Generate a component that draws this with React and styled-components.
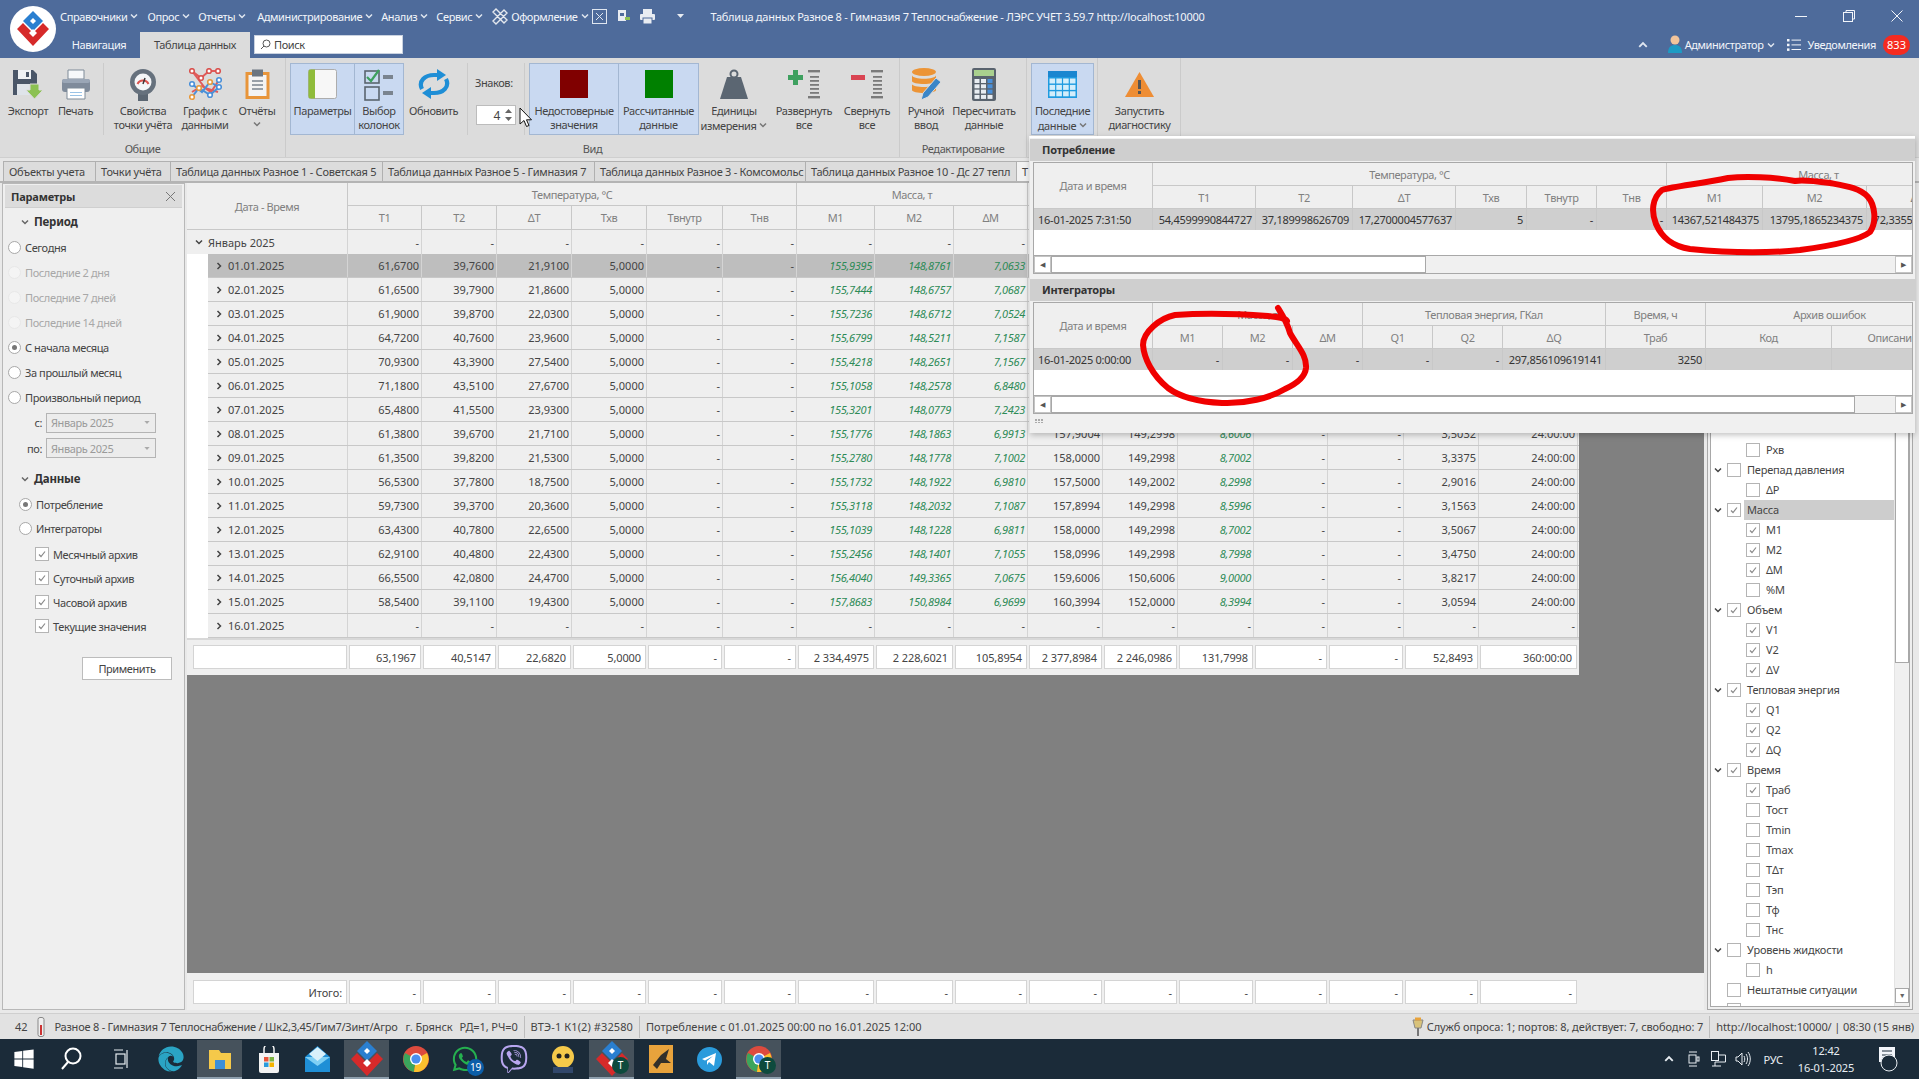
import React from "react";
import styled, { createGlobalStyle } from "styled-components";
import { FaWindows, FaEdge, FaWhatsapp, FaViber } from "react-icons/fa";

const Global = createGlobalStyle`
  html, body { margin: 0; padding: 0; background: #dcdcdc; }
  * { box-sizing: border-box; }
  body { font-family: "Noto Sans", "Liberation Sans", sans-serif; font-size: 11px; color: #444; letter-spacing: -0.4px; }
`;

const Page = styled.div`
  position: relative; width: 1919px; height: 1079px; overflow: hidden;
  display: flex; flex-direction: column; background: #dcdcdc;
`;

/* ---------- title bar ---------- */
const TitleBar = styled.header`
  height: 58px; flex: none; background: #4e6b9b; color: #f2f5fa; display: flex; padding-left: 10px;
`;
const LogoCircle = styled.div`
  width: 46px; height: 46px; margin-top: 6px; flex: none; border-radius: 50%; background: #fff;
  display: flex; align-items: center; justify-content: center;
`;
const TitleRows = styled.div`flex: 1; display: flex; flex-direction: column; min-width: 0;`;
const MenuRow = styled.div`height: 32px; display: flex; align-items: center; padding-left: 4px; position: relative;`;
const MenuItem = styled.span`display: inline-flex; align-items: center; gap: 3px; margin-right: ${p => p.$mr ?? 8}px; white-space: nowrap;`;
const WinTitle = styled.span`margin-left: 27px; white-space: nowrap; letter-spacing: -0.25px;`;
const WinButtons = styled.div`margin-left: auto; display: flex; gap: 36px; padding-right: 16px; align-items: center;`;
const TabRow = styled.div`height: 26px; display: flex; align-items: stretch; padding-left: 7px;`;
const TopTab = styled.div`
  width: ${p => p.$w}px; display: flex; align-items: center; justify-content: center; padding-right: ${p => p.$pr ?? 0}px; padding-bottom: 1px;
  background: ${p => (p.$on ? "#dcdcdc" : "transparent")}; color: ${p => (p.$on ? "#444" : "#f2f5fa")};
`;
const SearchBox = styled.div`
  width: 149px; height: 19px; margin: 3px 0 0 4px; background: #fff; border: 1px solid #c9d2e0;
  display: flex; align-items: center; gap: 3px; padding-left: 5px; color: #444;
`;
const UserArea = styled.div`margin-left: auto; display: flex; align-items: center; padding: 0 9px 1px 0; color: #f2f5fa;`;
const UserName = styled.span`margin: 0 4px 0 3px;`;
const NoticeLabel = styled.span`margin: 0 7px 0 6px;`;
const Badge = styled.span`
  width: 27px; height: 20px; border-radius: 10px; background: #f52b20; color: #fff; text-align: center; line-height: 20px; letter-spacing: 0;
`;

/* ---------- ribbon ---------- */
const Ribbon = styled.section`height: 100px; flex: none; display: flex; background: #dcdcdc; border-bottom: 1px solid #cfcfcf;`;
const RGroup = styled.div`
  width: ${p => p.$w}px; flex: none; display: flex; flex-direction: column; border-right: 1px solid #cbcbcb;
  padding-left: 4px;
`;
const RItems = styled.div`display: flex; height: 72px; margin-top: 5px;`;
const RLabel = styled.div`height: 22px; padding-top: 6px; line-height: 16px; text-align: center; color: #555; margin-left: -4px;`;
const RBtn = styled.div`
  width: ${p => p.$w}px; flex: none; height: 72px; display: flex; flex-direction: column; align-items: center;
  text-align: center; line-height: 14px; color: #444;
  background: ${p => (p.$on ? "#c9d9f1" : "transparent")};
  border: 1px solid ${p => (p.$on ? "#a3b7d2" : "transparent")};
  margin-left: ${p => (p.$joined ? "-1px" : "0")};
`;
const RIcon = styled.div`height: 40px; flex: none; display: flex; align-items: center; justify-content: center;`;
const RSep = styled.div`width: 1px; height: 72px; flex: none; background: #cbcbcb; margin: 0 4px;`;
const Spin = styled.div`width: 48px; flex: none; padding-top: 12px; padding-left: 3px;`;
const SpinBox = styled.div`
  margin: 15px 0 0 1px; width: 40px; height: 20px; background: #fff; border: 1px solid #bcbcbc; display: flex; align-items: center;
  justify-content: flex-end; gap: 5px; padding-right: 3px; font-size: 12px;
`;
const ColorSq = styled.div`width: 28px; height: 28px; background: ${p => p.$c};`;
const SmallChev = styled.span`display: inline-block; vertical-align: 1px; margin-left: 3px;`;
const ChevLine = styled.span`display: block; line-height: 12px; height: 12px;`;

/* ---------- doc tabs ---------- */
const DocTabs = styled.nav`
  height: 25px; flex: none; padding: 3px 0 0 3px; display: flex; background: #e6e6e6; border-bottom: 2px solid #b4b4b4;
`;
const DocTab = styled.div`
  width: ${p => p.$w}px; flex: none; height: 20px; padding: 0 5px; line-height: 19px; background: ${p => (p.$on ? "#f2f2f2" : "#dcdcdc")}; border: 1px solid #b0b0b0;
  border-bottom: 0; margin-right: -1px; overflow: hidden; white-space: nowrap; color: #444; letter-spacing: -0.25px;
`;

/* ---------- body ---------- */
const Body = styled.main`flex: 1; min-height: 0; display: flex; background: #e9e9e9; padding-left: 2px;`;
const LeftPanel = styled.aside`
  width: 183px; flex: none; margin-bottom: 3px; border: 1px solid #b8b8b8; background: #efefef; padding: 1px 2px; display: flex; flex-direction: column;
`;
const PanelHead = styled.div`
  height: 23px; flex: none; background: #dcdcdc; border-bottom: 1px solid #cfcfcf; display: flex; align-items: center; justify-content: space-between;
  padding: 0 6px; font-weight: 700; color: #333; letter-spacing: -0.2px;
`;
const Section = styled.div`
  height: 27px; margin-top: ${p => p.$mt ?? 0}px; display: flex; align-items: center; gap: 5px; padding-left: 16px; font-weight: 700; color: #333; font-size: 11.5px;  letter-spacing: -0.2px;
`;
const RadioRow = styled.div`
  height: ${p => p.$h ?? 25}px; display: flex; align-items: center; gap: 4px; padding-left: ${p => p.$pl ?? 3}px;
  color: ${p => (p.$off ? "#a8a8a8" : "#444")};
`;
const Radio = styled.span`
  width: 13px; height: 13px; flex: none; border-radius: 50%; background: ${p => (p.$off ? "#f4f4f4" : "#fff")}; border: 1px solid ${p => (p.$off ? "#e8e8e8" : "#a8a8a8")};
  display: flex; align-items: center; justify-content: center;
  &::after { content: ""; width: 5px; height: 5px; border-radius: 50%; background: ${p => (p.$on ? "#777" : "transparent")}; }
`;
const CheckList = styled.div`margin-top: 1px;`;
const CheckRow = styled.div`height: 24px; display: flex; align-items: center; gap: 4px; padding-left: 30px;`;
const Box = styled.span`
  width: 14px; height: 14px; flex: none; background: #fff; border: 1px solid #b4b4b4; display: flex; align-items: center; justify-content: center;
`;
const ComboRow = styled.div`height: 25.5px; display: flex; align-items: center; justify-content: flex-end; gap: 4px; padding-right: 26px;`;
const Combo = styled.div`
  width: 110px; height: 20px; border: 1px solid #b4b4b4; background: #ececec; color: #9a9a9a; display: flex; align-items: center; justify-content: space-between; padding: 0 5px 0 4px;
`;
const ApplyBtn = styled.div`
  margin: 19px 0 0 77px; width: 90px; height: 23px; background: #fff; border: 1px solid #bcbcbc; text-align: center; line-height: 21px;
`;

/* ---------- center ---------- */
const Center = styled.div`width: 1517px; flex: none; margin-left: 2px; margin-bottom: 3px; display: flex; flex-direction: column; background: #808080;`;
const TableWrap = styled.div`width: 1392px; height: 492px; flex: none; background: #fff; display: flex; flex-direction: column;`;
const COLS = "74px 75px 75px 75px 76px 74px 78px 79px 74px 75px 75px 76px 74px 76px 75px 99px";
const HeadGrid = styled.div`
  height: 47px; flex: none; display: grid; grid-template-columns: 161px ${COLS}; grid-template-rows: 23px 24px; background: #efefef; border-bottom: 1px solid #c4c4c4;
`;
const HCell = styled.div`
  grid-column: span ${p => p.$c ?? 1}; grid-row: span ${p => p.$r ?? 1}; display: flex; align-items: center; justify-content: center; color: #808080; white-space: nowrap;
  border-right: 1px solid #c8c8c8; border-bottom: 1px solid #c8c8c8; overflow: hidden;
`;
const GroupRow = styled.div`
  height: 24px; flex: none; display: grid; grid-template-columns: 161px ${COLS}; background: #efefef;
`;
const DataRow = styled.div`
  height: 24px; flex: none; display: grid; grid-template-columns: 140px ${COLS}; margin-left: 21px; background: ${p => (p.$sel ? "#bebebe" : "#efefef")};
  border-bottom: 1px solid #c8c8c8;
`;
const Cell = styled.div`
  display: flex; align-items: center; justify-content: flex-end; padding-right: 2px; border-right: 1px solid #d4d4d4; white-space: nowrap;
  color: ${p => (p.$g ? "#2e8b57" : "#444")}; font-style: ${p => (p.$g ? "italic" : "normal")}; letter-spacing: ${p => (p.$g ? "-0.3px" : "0")};
`;
const DateCell = styled.div`display: flex; align-items: center; gap: 5px; padding-left: 7px; border-right: 1px solid #d4d4d4; color: #444; letter-spacing: 0;`;
const GroupCell = styled(DateCell)`padding-left: 8px;`;
const SumRow = styled.div`
  height: 38px; flex: none; border-top: 2px solid #d8d8d8; background: #efefef; display: grid; grid-template-columns: 160px ${COLS};
  padding: 5px 0 0 0; margin: 0;
`;
const SumBox = styled.div`
  height: 24px; margin-left: ${p => (p.$first ? 6 : 2)}px; background: #fff; border: 1px solid #d4d4d4; display: flex; align-items: center; justify-content: flex-end; padding-right: 4px; white-space: nowrap; color: #444; letter-spacing: -0.1px;
`;
const Gray = styled.div`flex: 1; background: #808080;`;
const Foot = styled.div`
  height: 37px; flex: none; background: #efefef; display: grid; grid-template-columns: 160px ${COLS}; padding-top: 7px; align-content: start;
`;
const RightPanel = styled.aside`
  width: 206px; flex: none; margin: 0 0 3px 3px; border: 1px solid #a8a8a8; background: #efefef; padding: 2px; display: flex; flex-direction: column;
`;
const TreeWrap = styled.div`flex: 1; display: flex; border: 1px solid #a8a8a8; background: #fff; min-height: 0; overflow: hidden;`;
const Tree = styled.div`flex: 1; overflow: hidden; padding-top: 253px;`;
const TreeRow = styled.div`
  height: 20px; display: flex; align-items: center; padding-left: ${p => (p.$child ? 35 : 16)}px; position: relative; color: #444; white-space: nowrap; letter-spacing: -0.2px;
`;
const TreeLabel = styled.span`
  flex: 1; height: 20px; line-height: 20px; margin-left: 3px; padding-left: 3px; background: ${p => (p.$sel ? "#cdcdcd" : "transparent")};
`;
const TreeArrow = styled.span`position: absolute; left: 3px; top: 6px; display: flex;`;
const VScroll = styled.div`
  width: 15px; flex: none; background: #f0f0f0; display: flex; flex-direction: column; justify-content: space-between; border-left: 1px solid #e4e4e4; padding-bottom: 3px;
`;
const VThumb = styled.div`height: 478px; background: #fff; border: 1px solid #a8a8a8; margin-top: -2px;`;
const VBtn = styled.div`height: 15px; background: #fff; border: 1px solid #a8a8a8; display: flex; align-items: center; justify-content: center; font-size: 7px; color: #666;`;

/* ---------- popup ---------- */
const Popup = styled.div`
  position: absolute; left: 1030px; top: 136px; width: 885px; height: 297px; background: #f0f0f0; border-top: 2px solid #fff; padding: 1px 0 0 0;
  box-shadow: 0 2px 6px rgba(0,0,0,.25), -1px 0 0 #fff; z-index: 5;
`;
const PopHead = styled.div`height: 22px; background: #cfcfcf; padding-left: 12px; line-height: 21px; font-weight: 700; color: #333; letter-spacing: -0.2px;`;
const PopGrid = styled.div`margin: 1px 2px 0 3px; border: 1px solid #a8a8a8; background: #fff; height: 112px; overflow: hidden; display: flex; flex-direction: column;`;
const PopInner = styled.div`
  display: grid; grid-template-columns: ${p => p.$cols}; grid-template-rows: 23px 23px 21px; width: max-content; flex: none;
`;
const PHCell = styled(HCell)`background: #efefef; color: #808080;`;
const PCell = styled.div`
  background: #cfcfcf; display: flex; align-items: center; justify-content: ${p => (p.$l ? "flex-start" : "flex-end")};
  padding: 0 3px 0 ${p => (p.$l ? 4 : 0)}px; white-space: nowrap; color: #333; letter-spacing: -0.25px; border-right: 1px solid #c8c8c8; overflow: hidden;
`;
const PWhite = styled.div`flex: 1; background: #fff;`;
const HScroll = styled.div`height: 18px; flex: none; background: #f0f0f0; border-top: 1px solid #a8a8a8; display: flex; align-items: stretch; justify-content: space-between;`;
const HLeft = styled.div`display: flex;`;
const HBtn = styled.div`width: 17px; background: #fff; border: 1px solid #c4c4c4; font-size: 7px; display: flex; align-items: center; justify-content: center; color: #555;`;
const HThumb = styled.div`width: ${p => p.$w}px; background: #fff; border: 1px solid #a8a8a8;`;
const PopGap = styled.div`height: 5px;`;
const Grip = styled.div`padding: 5px 0 0 5px; display: grid; grid-template-columns: repeat(3, 2px); gap: 1px;
  & > i { width: 1.5px; height: 1.5px; background: #aaa; display: block; }`;
const Overlay = styled.svg`position: absolute; left: 0; top: 0; pointer-events: none; z-index: 6;`;
const CursorSpot = styled.div`position: absolute; left: 519px; top: 107px; z-index: 8; display: flex;`;

/* ---------- status / taskbar ---------- */
const Status = styled.footer`
  height: 26px; flex: none; background: #e2e2e2; border-top: 1px solid #cfcfcf; display: flex; align-items: center; padding-left: 15px; white-space: nowrap; color: #444; letter-spacing: -0.1px;
`;
const StatSep = styled.span`width: 1px; height: 22px; background: #bdbdbd; margin: 0 6px;`;
const StatText = styled.span`margin: 0 ${p => p.$r ?? 0}px 0 ${p => p.$l ?? 0}px; letter-spacing: ${p => p.$sp ?? -0.1}px;`;
const StatRight = styled.div`margin-left: auto; display: flex; align-items: center; padding-right: 5px; letter-spacing: -0.1px;`;
const Taskbar = styled.div`height: 40px; flex: none; background: #1b2b39; display: flex; align-items: stretch; color: #e8edf2; letter-spacing: -0.1px;`;
const TaskSlot = styled.div`
  width: ${p => (p.$on ? 45 : p.$w ?? 49)}px; flex: none; display: flex; align-items: center; justify-content: center; position: relative; color: #fff;
  background: ${p => (p.$on ? "#46525c" : "transparent")};
  ${p => (p.$on ? "border-bottom: 2px solid #8fa0ae; margin: 1px 2px 0;" : "")}
`;
const TaskBadge = styled.span`
  position: absolute; right: 5px; bottom: 3px; width: 17px; height: 17px; border-radius: 50%; background: ${p => p.$c}; color: #fff; font-size: 10px; text-align: center; line-height: 17px;
`;
const Tray = styled.div`margin-left: auto; display: flex; align-items: center; color: #e8edf2;`;
const TrayText = styled.span`margin-left: 12px;`;
const Clock = styled.div`width: 70px; text-align: center; line-height: 17px; margin-left: 8px;`;

/* ---------- small drawings ---------- */
const Chev = ({ c = "#dfe6f0", s = 8, up, right, w = 1.5 }) => (
  <svg width={s} height={s} viewBox="0 0 8 8" fill="none" stroke={c} strokeWidth={w} style={{ transform: up ? "rotate(180deg)" : right ? "rotate(-90deg)" : "none", flex: "none" }}>
    <path d="M1 2.5 4 5.5 7 2.5" />
  </svg>
);
const Tick = () => (
  <svg width="10" height="10" viewBox="0 0 10 10" fill="none" stroke="#8a8a8a" strokeWidth="1.2"><path d="M2 5.5 4 7.5 8 2.5" /></svg>
);
const Logo = () => (
  <svg width="36" height="38" viewBox="0 0 36 38">
    <path d="M18 1 28 11 18 21 8 11Z" fill="#2a7fd0" />
    <path d="M18 8 21 11 18 14 15 11Z" fill="#fff" />
    <path d="M2 19 8 13 18 23 28 13 34 19 18 36Z" fill="#d62a2a" />
    <path d="M18 27 22 23 18 19 14 23Z" fill="#fff" />
  </svg>
);
const Floppy = () => (
  <svg width="32" height="30" viewBox="0 0 32 30">
    <path d="M1 1H21L25 5V26H1Z" fill="#4a5668" /><rect x="6" y="1" width="13" height="9" fill="#eef1f4" /><rect x="14" y="3" width="3" height="5" fill="#4a5668" /><rect x="5" y="15" width="16" height="11" fill="#dfe4ea" />
    <path d="M18 15H27V21H31L22.5 30 14 21H18Z" fill="#8cc152" stroke="#dcdcdc" />
  </svg>
);
const Printer = () => (
  <svg width="30" height="31" viewBox="0 0 30 31">
    <path d="M7 1H23V10H7Z" fill="#f6f8fa" stroke="#7f8b98" /><rect x="1" y="10" width="28" height="13" rx="3" fill="#7f8b9b" /><rect x="1" y="10" width="28" height="4" rx="2" fill="#9aa6b6" />
    <path d="M6 19H24V30H6Z" fill="#fff" stroke="#7f8b98" /><rect x="9" y="23" width="12" height="1" fill="#9ac3e6" /><rect x="9" y="26" width="12" height="1" fill="#9ac3e6" />
  </svg>
);
const Gauge = () => (
  <svg width="28" height="33" viewBox="0 0 28 33">
    <rect x="9" y="23" width="10" height="10" fill="#5b6672" /><circle cx="14" cy="14" r="13" fill="#66717d" /><circle cx="14" cy="14" r="8.5" fill="#f4f6f8" />
    <path d="M8.5 16A6 6 0 0 1 19.5 16" fill="none" stroke="#d9534f" strokeWidth="2" /><path d="M14 16 16 10" stroke="#333" strokeWidth="1.4" />
  </svg>
);
const NetChart = () => (
  <svg width="33" height="33" viewBox="0 0 33 33" fill="none">
    <path d="M3 3 12 10 20 3 29 3M3 3 16 20 29 24M3 24 13 18 22 24 30 12" strokeWidth="2" stroke="#e05b5b" />
    <path d="M3 29 10 20 21 27 30 19M3 16 13 24 21 14 30 19" strokeWidth="2" stroke="#4a90d9" />
    {[[3, 3], [20, 3], [29, 3], [12, 10], [3, 16], [21, 14], [30, 19], [10, 20], [21, 27], [3, 29], [30, 12]].map(([x, y], i) => (
      <circle key={i} cx={x} cy={y} r="2.3" fill="#fff" stroke={i < 4 ? "#d9534f" : i % 2 ? "#e8993c" : "#4a90d9"} strokeWidth="1.6" />
    ))}
  </svg>
);
const Clip = () => (
  <svg width="25" height="30" viewBox="0 0 25 30">
    <rect x="0.5" y="3" width="24" height="27" fill="#e8953a" /><rect x="3.5" y="6" width="18" height="21" fill="#f3f3f3" /><rect x="7" y="0.5" width="11" height="7" fill="#6b7580" />
    <path d="M7 12H18M7 16H18M7 20H18" stroke="#7b8590" strokeWidth="1.6" />
  </svg>
);
const Params = () => (
  <svg width="29" height="31" viewBox="0 0 29 31">
    <rect x="0.5" y="0.5" width="28" height="29" rx="2" fill="#f7f7f7" stroke="#adadad" /><path d="M0.5 2.5a2 2 0 0 1 2-2H7V29.5H2.5a2 2 0 0 1-2-2Z" fill="#8fbc3b" />
  </svg>
);
const Columns = () => (
  <svg width="30" height="33" viewBox="0 0 30 33" fill="none">
    <rect x="1" y="3" width="14" height="12" stroke="#5a646f" strokeWidth="1.6" /><path d="M3 9 7 13 15 2" stroke="#3ea05f" strokeWidth="2.2" />
    <rect x="19" y="7" width="10" height="4" fill="#7a848f" /><rect x="1" y="19" width="14" height="13" stroke="#5a646f" strokeWidth="1.6" /><rect x="19" y="23" width="10" height="4" fill="#7a848f" />
  </svg>
);
const Refresh = () => (
  <svg width="34" height="30" viewBox="0 0 34 30" fill="none" stroke="#1e8ed6" strokeWidth="4.2">
    <path d="M5 20C1 12 8 6 17 6H22" /><path d="M29 10C33 18 26 24 17 24H12" />
    <path d="M20 0 29 6 20 12Z" fill="#1e8ed6" stroke="none" /><path d="M14 18 5 24 14 30Z" fill="#1e8ed6" stroke="none" />
  </svg>
);
const Weight = () => (
  <svg width="28" height="30" viewBox="0 0 28 30">
    <circle cx="14" cy="5" r="3.5" fill="none" stroke="#5b6672" strokeWidth="2" /><path d="M7 8H21L28 30H0Z" fill="#5b6672" />
  </svg>
);
const Lines = () => (
  <g fill="#7a7a7a"><rect x="20" y="1" width="12" height="2.4" />{[7, 11, 15, 19, 23].map(y => <rect key={y} x="22" y={y} width="9" height="1.8" />)}<rect x="20" y="27" width="12" height="2.4" /></g>
);
const Expand = () => (
  <svg width="32" height="30" viewBox="0 0 32 30"><Lines /><path d="M5 1H10V6H15V11H10V16H5V11H0V6H5Z" fill="#3ea05f" /></svg>
);
const Collapse = () => (
  <svg width="32" height="30" viewBox="0 0 32 30"><Lines /><rect x="0" y="6" width="14" height="5" fill="#d94452" /></svg>
);
const Db = () => (
  <svg width="30" height="33" viewBox="0 0 30 33">
    <g fill="#ec9436"><ellipse cx="13" cy="4" rx="12" ry="4" /><path d="M1 7C1 12 25 12 25 7V13C25 17 1 17 1 13Z" /><path d="M1 16C1 20 25 20 25 16V22C25 26 1 26 1 22Z" /></g>
    <path d="M10 32 12 25 25 10 30 14 17 29Z" fill="#3a86c8" stroke="#dcdcdc" />
  </svg>
);
const Calc = () => (
  <svg width="24" height="33" viewBox="0 0 24 33">
    <rect width="24" height="33" rx="2" fill="#59636e" /><rect x="2" y="2" width="20" height="6" fill="#a9d08e" />
    {[0, 1, 2, 3].map(r => [0, 1, 2].map(c => <rect key={r + "" + c} x={2.5 + c * 6.5} y={11 + r * 5.3} width="5" height="4" fill={c === 2 && r < 3 ? "#4a90d9" : "#e8edf2"} />))}
  </svg>
);
const TableIc = () => (
  <svg width="29" height="27" viewBox="0 0 29 27">
    <rect width="29" height="27" fill="#1e9be0" /><rect x="0" y="0" width="29" height="6" fill="#1a86d0" />
    {[0, 1, 2].map(r => [0, 1, 2, 3].map(c => <rect key={r + "" + c} x={1.5 + c * 6.8} y={7.5 + r * 6.4} width="5.6" height="5" fill="#d3eefb" />))}
  </svg>
);
const Warn = () => (
  <svg width="29" height="25" viewBox="0 0 29 25">
    <path d="M14.5 0 29 25H0Z" fill="#ee8d34" /><rect x="13" y="8" width="3" height="9" fill="#555" /><rect x="13" y="19" width="3" height="3" fill="#555" />
  </svg>
);
const Chrome = ({ s = 26 }) => (
  <svg width={s} height={s} viewBox="0 0 26 26">
    <circle cx="13" cy="13" r="13" fill="#dd4b3e" /><path d="M13 13 2 7A13 13 0 0 0 11 26Z" fill="#3ba55c" /><path d="M13 13 24 7A13 13 0 0 1 11 26Z" fill="#fbc02d" />
    <circle cx="13" cy="13" r="6" fill="#fff" /><circle cx="13" cy="13" r="4.6" fill="#4a8ff0" />
  </svg>
);
const Cursor = () => (
  <svg width="13" height="21" viewBox="0 0 13 21" fill="#fff" stroke="#111" strokeWidth="1"><path d="M1 1V17L5 13.5 7.5 19.5 10 18.5 7.5 12.8H12.5Z" /></svg>
);

/* ---------- data ---------- */
const D = "-";
const rows = [
  ["01.01.2025", "61,6700", "39,7600", "21,9100", "155,9395", "148,8761", "7,0633"],
  ["02.01.2025", "61,6500", "39,7900", "21,8600", "155,7444", "148,6757", "7,0687"],
  ["03.01.2025", "61,9000", "39,8700", "22,0300", "155,7236", "148,6712", "7,0524"],
  ["04.01.2025", "64,7200", "40,7600", "23,9600", "155,6799", "148,5211", "7,1587"],
  ["05.01.2025", "70,9300", "43,3900", "27,5400", "155,4218", "148,2651", "7,1567"],
  ["06.01.2025", "71,1800", "43,5100", "27,6700", "155,1058", "148,2578", "6,8480"],
  ["07.01.2025", "65,4800", "41,5500", "23,9300", "155,3201", "148,0779", "7,2423"],
  ["08.01.2025", "61,3800", "39,6700", "21,7100", "155,1776", "148,1863", "6,9913", "157,9004", "149,2998", "8,6006", "3,5032"],
  ["09.01.2025", "61,3500", "39,8200", "21,5300", "155,2780", "148,1778", "7,1002", "158,0000", "149,2998", "8,7002", "3,3375"],
  ["10.01.2025", "56,5300", "37,7800", "18,7500", "155,1732", "148,1922", "6,9810", "157,5000", "149,2002", "8,2998", "2,9016"],
  ["11.01.2025", "59,7300", "39,3700", "20,3600", "155,3118", "148,2032", "7,1087", "157,8994", "149,2998", "8,5996", "3,1563"],
  ["12.01.2025", "63,4300", "40,7800", "22,6500", "155,1039", "148,1228", "6,9811", "158,0000", "149,2998", "8,7002", "3,5067"],
  ["13.01.2025", "62,9100", "40,4800", "22,4300", "155,2456", "148,1401", "7,1055", "158,0996", "149,2998", "8,7998", "3,4750"],
  ["14.01.2025", "66,5500", "42,0800", "24,4700", "156,4040", "149,3365", "7,0675", "159,6006", "150,6006", "9,0000", "3,8217"],
  ["15.01.2025", "58,5400", "39,1100", "19,4300", "157,8683", "150,8984", "6,9699", "160,3994", "152,0000", "8,3994", "3,0594"],
];
const sums = ["63,1967", "40,5147", "22,6820", "5,0000", D, D, "2 334,4975", "2 228,6021", "105,8954", "2 377,8984", "2 246,0986", "131,7998", D, D, "52,8493", "360:00:00"];
const heads = ["T1", "T2", "ΔT", "Tхв", "Tвнутр", "Tнв", "M1", "M2", "ΔM"];
const hidden = Array.from({ length: 7 }, (_, i) => i);
const tree = [
  { t: "Перепад давления", p: 1 }, { t: "ΔP" },
  { t: "Масса", on: 1, p: 1, sel: 1 }, { t: "M1", on: 1 }, { t: "M2", on: 1 }, { t: "ΔM", on: 1 }, { t: "%M" },
  { t: "Объем", on: 1, p: 1 }, { t: "V1", on: 1 }, { t: "V2", on: 1 }, { t: "ΔV", on: 1 },
  { t: "Тепловая энергия", on: 1, p: 1 }, { t: "Q1", on: 1 }, { t: "Q2", on: 1 }, { t: "ΔQ", on: 1 },
  { t: "Время", on: 1, p: 1 }, { t: "Траб", on: 1 }, { t: "Тост" }, { t: "Tmin" }, { t: "Tmax" }, { t: "TΔт" }, { t: "Тэп" }, { t: "Тф" }, { t: "Тнс" },
  { t: "Уровень жидкости", p: 1 }, { t: "h" },
  { t: "Нештатные ситуации", p: 1, noArrow: 1 }, { t: "", p: 1, noArrow: 1 },
];

const RB = ({ w, on, joined, icon, lines, chev, chevBelow }) => (
  <RBtn $w={w} $on={on} $joined={joined}>
    <RIcon>{icon}</RIcon>
    {lines.map((l, i) => (
      <span key={i}>{l}{chev && i === lines.length - 1 && <SmallChev><Chev c="#777" /></SmallChev>}</span>
    ))}
    {chevBelow && <ChevLine><Chev c="#777" /></ChevLine>}
  </RBtn>
);

const PopTable = ({ cols, children, thumb }) => (
  <PopGrid>
    <PopInner $cols={cols}>{children}</PopInner>
    <PWhite />
    <HScroll>
      <HLeft><HBtn>◀</HBtn><HThumb $w={thumb} /></HLeft>
      <HBtn>▶</HBtn>
    </HScroll>
  </PopGrid>
);

export default function App() {
  return (
    <Page>
      <Global />
      <TitleBar>
        <LogoCircle><Logo /></LogoCircle>
        <TitleRows>
          <MenuRow>
            <MenuItem $mr={9}>Справочники <Chev /></MenuItem>
            <MenuItem $mr={8}>Опрос <Chev /></MenuItem>
            <MenuItem $mr={11}>Отчеты <Chev /></MenuItem>
            <MenuItem $mr={8}>Администрирование <Chev /></MenuItem>
            <MenuItem $mr={8}>Анализ <Chev /></MenuItem>
            <MenuItem $mr={8}>Сервис <Chev /></MenuItem>
            <MenuItem $mr={3}>
              <svg width="17" height="17" viewBox="0 0 17 17" fill="none" stroke="#e4e8ee" strokeWidth="1.4"><path d="M2 13 13 2 16 5 5 16ZM2 4 5 1 16 12 13 15Z" /></svg>
              Оформление <Chev />
            </MenuItem>
            <MenuItem $mr={10}>
              <svg width="15" height="15" viewBox="0 0 15 15" fill="none" stroke="#dfe6f0"><rect x="0.5" y="0.5" width="14" height="14" /><path d="M4 4 11 11M11 4 4 11" /></svg>
            </MenuItem>
            <MenuItem $mr={9}>
              <svg width="14" height="15" viewBox="0 0 14 15"><rect x="1" y="1" width="8" height="11" fill="#e8ecf2" /><rect x="3" y="4" width="4" height="3" fill="#4e6b9b" /><path d="M8 8H13V11H8Z" fill="#8cc152" /></svg>
            </MenuItem>
            <MenuItem $mr={22}>
              <svg width="15" height="15" viewBox="0 0 15 15" fill="#e8ecf2"><rect x="3" y="0" width="9" height="5" /><rect x="0" y="5" width="15" height="6" rx="1" /><rect x="3" y="9" width="9" height="6" stroke="#4e6b9b" /></svg>
            </MenuItem>
            <MenuItem $mr={0}>
              <svg width="7" height="5" viewBox="0 0 7 5" fill="#e8ecf2"><path d="M0 0H7L3.5 4Z" /></svg>
            </MenuItem>
            <WinTitle>Таблица данных Разное 8 - Гимназия 7 Теплоснабжение - ЛЭРС УЧЕТ 3.59.7 http://localhost:10000</WinTitle>
            <WinButtons>
              <svg width="12" height="12" viewBox="0 0 12 12" stroke="#f2f5fa"><path d="M0 6.5H12" /></svg>
              <svg width="12" height="12" viewBox="0 0 12 12" fill="none" stroke="#f2f5fa"><rect x="0.5" y="2.5" width="9" height="9" /><path d="M3 2.5V.5H11.5V9H9.5" /></svg>
              <svg width="12" height="12" viewBox="0 0 12 12" stroke="#f2f5fa"><path d="M.5.5 11.5 11.5M11.5.5.5 11.5" /></svg>
            </WinButtons>
          </MenuRow>
          <TabRow>
            <TopTab $w={77} $pr={5}>Навигация</TopTab>
            <TopTab $w={110} $on>Таблица данных</TopTab>
            <SearchBox>
              <svg width="11" height="11" viewBox="0 0 11 11" fill="none" stroke="#555"><circle cx="6.5" cy="4.5" r="3.5" /><path d="M4 7 1 10" /></svg>
              Поиск
            </SearchBox>
            <UserArea>
              <Chev up s={10} />
              <svg style={{ marginLeft: 20 }} width="14" height="19" viewBox="0 0 14 19"><circle cx="7" cy="5" r="4.5" fill="#f2c49b" /><path d="M0 18C0 12 3 10 7 10S14 12 14 18Z" fill="#1c9bc4" /></svg>
              <UserName>Администратор</UserName>
              <Chev />
              <svg style={{ marginLeft: 12 }} width="14" height="12" viewBox="0 0 14 12" fill="#f2f5fa"><rect x="0" y="0" width="2.5" height="2.5" /><rect x="0" y="4.7" width="2.5" height="2.5" /><rect x="0" y="9.4" width="2.5" height="2.5" /><rect x="4.5" y="0.6" width="9.5" height="1" /><rect x="4.5" y="5.4" width="9.5" height="1" /><rect x="4.5" y="10" width="9.5" height="1" /></svg>
              <NoticeLabel>Уведомления</NoticeLabel>
              <Badge>833</Badge>
            </UserArea>
          </TabRow>
        </TitleRows>
      </TitleBar>

      <Ribbon>
        <RGroup $w={286}>
          <RItems>
            <RB w={48} icon={<Floppy />} lines={["Экспорт"]} />
            <RB w={47} icon={<Printer />} lines={["Печать"]} />
            <RSep />
            <RB w={70} icon={<Gauge />} lines={["Свойства", "точки учёта"]} />
            <RB w={54} icon={<NetChart />} lines={["График с", "данными"]} />
            <RB w={50} icon={<Clip />} lines={["Отчёты"]} chevBelow />
          </RItems>
          <RLabel>Общие</RLabel>
        </RGroup>
        <RGroup $w={614}>
          <RItems>
            <RB w={65} on icon={<Params />} lines={["Параметры"]} />
            <RB w={50} on joined icon={<Columns />} lines={["Выбор", "колонок"]} />
            <RB w={59} icon={<Refresh />} lines={["Обновить"]} />
            <RSep />
            <Spin>
              Знаков:
              <SpinBox>4 <svg width="7" height="14" viewBox="0 0 7 14" fill="#666"><path d="M0 5 3.5 1 7 5ZM0 9H7L3.5 13Z" /></svg></SpinBox>
            </Spin>
            <RSep />
            <RB w={90} on icon={<ColorSq $c="#800000" />} lines={["Недостоверные", "значения"]} />
            <RB w={81} on joined icon={<ColorSq $c="#008000" />} lines={["Рассчитанные", "данные"]} />
            <RB w={70} icon={<Weight />} lines={["Единицы", "измерения"]} chev />
            <RB w={70} icon={<Expand />} lines={["Развернуть", "все"]} />
            <RB w={56} icon={<Collapse />} lines={["Свернуть", "все"]} />
          </RItems>
          <RLabel>Вид</RLabel>
        </RGroup>
        <RGroup $w={127}>
          <RItems>
            <RB w={44} icon={<Db />} lines={["Ручной", "ввод"]} />
            <RB w={72} icon={<Calc />} lines={["Пересчитать", "данные"]} />
          </RItems>
          <RLabel>Редактирование</RLabel>
        </RGroup>
        <RGroup $w={71}>
          <RItems>
            <RB w={63} on icon={<TableIc />} lines={["Последние", "данные"]} chev />
          </RItems>
        </RGroup>
        <RGroup $w={83}>
          <RItems>
            <RB w={75} icon={<Warn />} lines={["Запустить", "диагностику"]} />
          </RItems>
        </RGroup>
      </Ribbon>

      <DocTabs>
        <DocTab $w={93}>Объекты учета</DocTab>
        <DocTab $w={76}>Точки учёта</DocTab>
        <DocTab $w={213}>Таблица данных Разное 1 - Советская 5</DocTab>
        <DocTab $w={213}>Таблица данных Разное 5 - Гимназия 7</DocTab>
        <DocTab $w={212}>Таблица данных Разное 3 - Комсомольс</DocTab>
        <DocTab $w={212}>Таблица данных Разное 10 - Дс 27 тепл</DocTab>
        <DocTab $w={20} $on>Т</DocTab>
      </DocTabs>

      <Body>
        <LeftPanel>
          <PanelHead>Параметры
            <svg width="11" height="11" viewBox="0 0 11 11" stroke="#777"><path d="M1 1 10 10M10 1 1 10" /></svg>
          </PanelHead>
          <Section><Chev c="#666" />Период</Section>
          <RadioRow><Radio />Сегодня</RadioRow>
          <RadioRow $off><Radio $off />Последние 2 дня</RadioRow>
          <RadioRow $off><Radio $off />Последние 7 дней</RadioRow>
          <RadioRow $off><Radio $off />Последние 14 дней</RadioRow>
          <RadioRow><Radio $on />С начала месяца</RadioRow>
          <RadioRow><Radio />За прошлый месяц</RadioRow>
          <RadioRow><Radio />Произвольный период</RadioRow>
          <ComboRow>с: <Combo>Январь 2025 <svg width="6" height="3" viewBox="0 0 7 4" fill="#aaa"><path d="M0 0H7L3.5 4Z" /></svg></Combo></ComboRow>
          <ComboRow>по: <Combo>Январь 2025 <svg width="6" height="3" viewBox="0 0 7 4" fill="#aaa"><path d="M0 0H7L3.5 4Z" /></svg></Combo></ComboRow>
          <Section $mt={4}><Chev c="#666" />Данные</Section>
          <RadioRow $pl={14} $h={24.5}><Radio $on />Потребление</RadioRow>
          <RadioRow $pl={14} $h={24.5}><Radio />Интеграторы</RadioRow>
          <CheckList>
            {["Месячный архив", "Суточный архив", "Часовой архив", "Текущие значения"].map(t => (
              <CheckRow key={t}><Box><Tick /></Box>{t}</CheckRow>
            ))}
          </CheckList>
          <ApplyBtn>Применить</ApplyBtn>
        </LeftPanel>

        <Center>
          <TableWrap>
            <HeadGrid>
              <HCell $r={2}>Дата - Время</HCell>
              <HCell $c={6}>Температура, °C</HCell>
              <HCell $c={3}>Масса, т</HCell>
              <HCell $c={3} /><HCell $c={3} /><HCell />
              {heads.map(h => <HCell key={h}>{h}</HCell>)}
              {hidden.map(h => <HCell key={h} />)}
            </HeadGrid>
            <GroupRow>
              <GroupCell><Chev c="#444" />Январь 2025</GroupCell>
              {heads.map(h => <Cell key={h}>{D}</Cell>)}
              {hidden.map(h => <Cell key={h} />)}
            </GroupRow>
            {rows.map((r, i) => (
              <DataRow key={r[0]} $sel={i === 0}>
                <DateCell><Chev c="#444" right />{r[0]}</DateCell>
                <Cell>{r[1]}</Cell><Cell>{r[2]}</Cell><Cell>{r[3]}</Cell><Cell>5,0000</Cell><Cell>{D}</Cell><Cell>{D}</Cell>
                <Cell $g>{r[4]}</Cell><Cell $g>{r[5]}</Cell><Cell $g>{r[6]}</Cell>
                {r[7] ? (
                  <>
                    <Cell>{r[7]}</Cell><Cell>{r[8]}</Cell><Cell $g>{r[9]}</Cell>
                    <Cell>{D}</Cell><Cell>{D}</Cell><Cell>{r[10]}</Cell><Cell>24:00:00</Cell>
                  </>
                ) : hidden.map(h => <Cell key={h} />)}
              </DataRow>
            ))}
            <DataRow>
              <DateCell><Chev c="#444" right />16.01.2025</DateCell>
              {heads.map(h => <Cell key={h}>{D}</Cell>)}
              {hidden.map(h => <Cell key={h}>{D}</Cell>)}
            </DataRow>
            <SumRow>
              <SumBox $first />
              {sums.map((s, i) => <SumBox key={i}>{s}</SumBox>)}
            </SumRow>
          </TableWrap>
          <Gray />
          <Foot>
            <SumBox $first>Итого:</SumBox>
            {sums.map((_, i) => <SumBox key={i}>{D}</SumBox>)}
          </Foot>
        </Center>

        <RightPanel>
          <TreeWrap>
            <Tree>
              <TreeRow $child><Box /><TreeLabel>Pхв</TreeLabel></TreeRow>
              {tree.map((n, i) => (
                <TreeRow key={i} $child={!n.p}>
                  {n.p && !n.noArrow && <TreeArrow><Chev c="#444" /></TreeArrow>}
                  <Box>{n.on && <Tick />}</Box>
                  <TreeLabel $sel={n.sel}>{n.t}</TreeLabel>
                </TreeRow>
              ))}
            </Tree>
            <VScroll>
              <VThumb />
              <VBtn>▼</VBtn>
            </VScroll>
          </TreeWrap>
        </RightPanel>
      </Body>

      <Status>
        <StatText $r={10}>42</StatText>
        <svg width="8" height="20" viewBox="0 0 8 20"><rect x="1" y="0.5" width="6" height="19" rx="2" fill="#eee" stroke="#888" /><rect x="3" y="8" width="2" height="10" fill="#c33" /></svg>
        <StatText $l={9} $r={8} $sp={-0.22}>Разное 8 - Гимназия 7 Теплоснабжение / Шк2,3,45/Гим7/Зинт/Агро</StatText>
        <StatText $r={7}>г. Брянск</StatText>
        <StatText>РД=1, РЧ=0</StatText>
        <StatSep />
        <StatText $sp={0.1}>ВТЭ-1 К1(2) #32580</StatText>
        <StatSep />
        <StatText $sp={0}>Потребление с 01.01.2025 00:00 по 16.01.2025 12:00</StatText>
        <StatRight>
          <svg width="12" height="19" viewBox="0 0 12 19"><path d="M1 3H11L9 11H3Z" fill="#d8c27a" stroke="#888" /><rect x="3" y="0.5" width="6" height="3" fill="#e8a33c" /><path d="M6 11V19" stroke="#777" strokeWidth="2" /></svg>
          <StatText $l={3}>Служб опроса: 1; портов: 8, действует: 7, свободно: 7</StatText>
          <StatSep />
          <StatText>http://localhost:10000/ | 08:30 (15 янв)</StatText>
        </StatRight>
      </Status>

      <Taskbar>
        <TaskSlot $w={47}><FaWindows size={22} /></TaskSlot>
        <TaskSlot $w={48}>
          <svg width="22" height="24" viewBox="0 0 22 24" fill="none" stroke="#fff" strokeWidth="2"><circle cx="13" cy="9" r="7.5" /><path d="M8 15 2 22" /></svg>
        </TaskSlot>
        <TaskSlot $w={51}>
          <svg width="14" height="22" viewBox="0 0 14 22" fill="none" stroke="#e8edf2" strokeWidth="1.2"><path d="M0 2H9M0 20H9" /><rect x="2" y="6" width="9" height="10" /><path d="M13 2V20" /></svg>
        </TaskSlot>
        <TaskSlot><FaEdge size={26} color="#2aa4c4" /></TaskSlot>
        <TaskSlot $on>
          <svg width="24" height="24" viewBox="0 0 24 24"><path d="M1 3H11L13 6H23V22H1Z" fill="#f5c94a" /><rect x="7" y="13" width="10" height="9" fill="#3b8fd9" /></svg>
        </TaskSlot>
        <TaskSlot>
          <svg width="22" height="27" viewBox="0 0 22 27"><path d="M1 7H21V25a2 2 0 0 1-2 2H3a2 2 0 0 1-2-2Z" fill="#f3f3f3" /><path d="M6 8V3a5 5 0 0 1 10 0V8" fill="none" stroke="#f3f3f3" strokeWidth="1.5" /><rect x="6" y="11" width="4.5" height="4.5" fill="#e8553a" /><rect x="11.5" y="11" width="4.5" height="4.5" fill="#7cb342" /><rect x="6" y="16.5" width="4.5" height="4.5" fill="#2a9bdc" /><rect x="11.5" y="16.5" width="4.5" height="4.5" fill="#f5b400" /></svg>
        </TaskSlot>
        <TaskSlot>
          <svg width="25" height="26" viewBox="0 0 25 26"><path d="M12.5 0 25 11V26H0V11Z" fill="#1f8fd6" /><path d="M0 11 12.5 20 25 11" fill="#7fd0f5" /><path d="M4 8 12.5 1 21 8 12.5 15Z" fill="#d9f1fb" /></svg>
        </TaskSlot>
        <TaskSlot $on><Logo /></TaskSlot>
        <TaskSlot><Chrome /></TaskSlot>
        <TaskSlot><FaWhatsapp size={28} color="#25b04f" /><TaskBadge $c="#0b5ea8">19</TaskBadge></TaskSlot>
        <TaskSlot><FaViber size={28} color="#b8a6ef" /></TaskSlot>
        <TaskSlot>
          <svg width="26" height="28" viewBox="0 0 26 28"><ellipse cx="13" cy="12" rx="11" ry="11" fill="#f5c94a" /><circle cx="9" cy="11" r="2.5" fill="#222" /><circle cx="17" cy="11" r="2.5" fill="#222" /><path d="M3 22H23V28H3Z" fill="#31476b" /></svg>
        </TaskSlot>
        <TaskSlot $on>
          <Logo /><TaskBadge $c="#0d4a3d">T</TaskBadge>
        </TaskSlot>
        <TaskSlot>
          <svg width="24" height="28" viewBox="0 0 24 28"><rect width="24" height="28" fill="#e8a33c" /><path d="M4 20 12 10 20 4 17 14 22 18 12 18 8 24Z" fill="#33302a" /></svg>
        </TaskSlot>
        <TaskSlot>
          <svg width="25" height="25" viewBox="0 0 25 25"><circle cx="12.5" cy="12.5" r="12.5" fill="#2a9bdc" /><path d="M5 12 19 6 17 19 12 15 10 18 10 14 16 9 8 13.5Z" fill="#fff" /></svg>
        </TaskSlot>
        <TaskSlot $on><Chrome /><TaskBadge $c="#0d4a3d">T</TaskBadge></TaskSlot>
        <Tray>
          <Chev up c="#e8edf2" s={10} />
          <svg style={{ marginLeft: 14 }} width="12" height="16" viewBox="0 0 12 16" fill="none" stroke="#e8edf2"><path d="M1 1H9M1 15H9" /><rect x="1" y="4" width="7" height="8" /><rect x="9" y="6" width="2" height="4" /></svg>
          <svg style={{ marginLeft: 11 }} width="15" height="16" viewBox="0 0 15 16" fill="none" stroke="#e8edf2"><rect x="0.5" y="0.5" width="7" height="9" /><path d="M7.5 4H14.5V11H4V15M1 15H10" /></svg>
          <svg style={{ marginLeft: 9 }} width="16" height="16" viewBox="0 0 16 16" fill="none" stroke="#e8edf2"><path d="M1 6H3L7 2V14L3 10H1ZM9 5C10 7 10 9 9 11M11 3C13 6 13 10 11 13M13 1C16 5 16 11 13 15" /></svg>
          <TrayText>РУС</TrayText>
          <Clock>12:42<br />16-01-2025</Clock>
          <svg style={{ margin: "0 21px 0 17px" }} width="20" height="26" viewBox="0 0 20 26"><path d="M1 1H17V16H1Z" fill="#f2f5fa" /><path d="M4 5H14M4 9H14M4 13H11" stroke="#1b2b39" /><circle cx="11" cy="17" r="8" fill="#1b2b39" stroke="#e8edf2" /></svg>
        </Tray>
      </Taskbar>

      <Popup>
        <PopHead>Потребление</PopHead>
        <PopTable cols="119px 103px 97px 103px 71px 70px 70px 96px 104px 104px" thumb={375}>
          <PHCell $r={2}>Дата и время</PHCell>
          <PHCell $c={6}>Температура, °C</PHCell>
          <PHCell $c={3}>Масса, т</PHCell>
          {heads.map(h => <PHCell key={h}>{h}</PHCell>)}
          <PCell $l>16-01-2025 7:31:50</PCell>
          <PCell>54,4599990844727</PCell><PCell>37,189998626709</PCell><PCell>17,2700004577637</PCell>
          <PCell>5</PCell><PCell>{D}</PCell><PCell>{D}</PCell>
          <PCell>14367,521484375</PCell><PCell>13795,1865234375</PCell><PCell $l>&nbsp;72,3355</PCell>
        </PopTable>
        <PopGap />
        <PopHead>Интеграторы</PopHead>
        <PopTable cols="119px 70px 70px 70px 70px 70px 103px 100px 126px 122px" thumb={804}>
          <PHCell $r={2}>Дата и время</PHCell>
          <PHCell $c={3}>Масса, т</PHCell>
          <PHCell $c={3}>Тепловая энергия, ГКал</PHCell>
          <PHCell>Время, ч</PHCell>
          <PHCell $c={2}>Архив ошибок</PHCell>
          {["M1", "M2", "ΔM", "Q1", "Q2", "ΔQ", "Траб", "Код", "Описание"].map(h => <PHCell key={h}>{h}</PHCell>)}
          <PCell $l>16-01-2025 0:00:00</PCell>
          <PCell>{D}</PCell><PCell>{D}</PCell><PCell>{D}</PCell><PCell>{D}</PCell><PCell>{D}</PCell>
          <PCell>297,856109619141</PCell><PCell>3250</PCell><PCell /><PCell />
        </PopTable>
        <Grip>{Array.from({ length: 6 }, (_, i) => <i key={i} />)}</Grip>
      </Popup>

      <Overlay width="1919" height="1079" viewBox="0 0 1919 1079" fill="none" stroke="#f00000" strokeWidth="6" strokeLinecap="round" strokeLinejoin="round">
        <path d="M1795 181C1775 177 1745 176 1728 178C1700 184 1675 186 1662 190C1652 198 1651 212 1656 224C1662 238 1672 246 1690 249C1720 252 1760 254 1800 250C1830 246 1860 240 1870 232C1877 222 1875 205 1868 197C1860 188 1846 186 1830 183C1815 181 1800 180 1795 181" />
        <path d="M1278 308C1283 316 1287 322 1290 333C1297 346 1307 355 1306 368C1305 378 1296 384 1285 389C1270 398 1245 404 1222 403C1200 402 1180 397 1168 388C1152 375 1144 358 1143 345C1143 332 1160 318 1175 315C1205 313 1240 314 1268 316C1280 317 1285 318 1287 321" />
      </Overlay>
      <CursorSpot><Cursor /></CursorSpot>
    </Page>
  );
}
